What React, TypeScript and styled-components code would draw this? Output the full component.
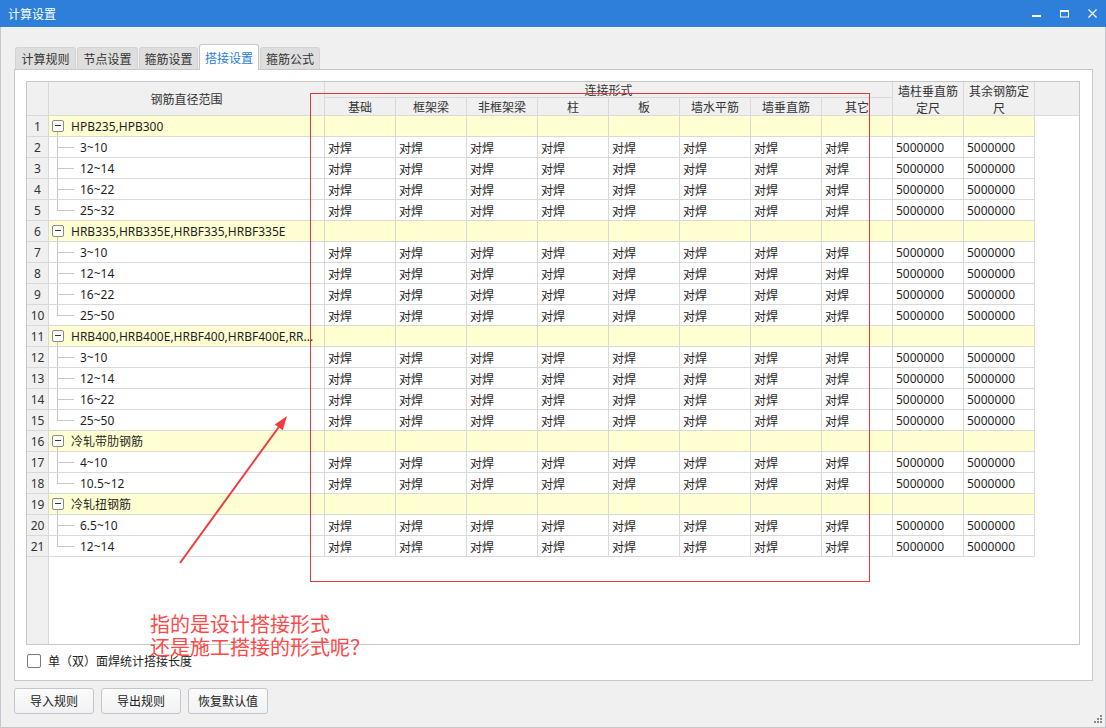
import React from 'react';
import styled, { createGlobalStyle } from 'styled-components';

const LATIN = `"Noto Sans", "Noto Sans CJK SC", sans-serif`;
const CJK = `"Noto Sans CJK SC", "Noto Sans", sans-serif`;
const LINE = '#d9d9d9';
const COLS = '22px 276px repeat(10, 71px) 1fr';

const GlobalStyle = createGlobalStyle`
  *, *::before, *::after { box-sizing: border-box; }
  html, body { margin: 0; padding: 0; background: #f0f0f0; }
  body { font-family: ${LATIN}; font-size: 12px; color: #1f1f1f; }
`;

const Window = styled.div`
  position: relative;
  width: 1106px;
  height: 728px;
  display: flex;
  flex-direction: column;
  background: #f0f0f0;
  overflow: hidden;
`;

const TitleBar = styled.div`
  height: 27px;
  flex: none;
  background: #2d7fda;
  color: #fff;
  display: flex;
  align-items: center;
  justify-content: space-between;
  padding-left: 8px;
`;

const Title = styled.span`
  font-family: ${CJK};
  font-size: 12px;
  line-height: 16px;
`;

const Controls = styled.div`
  display: flex;
  height: 100%;
`;

const ControlBtn = styled.div`
  width: 28px;
  height: 100%;
  display: flex;
  align-items: center;
  justify-content: center;
`;

const Body = styled.div`
  flex: 1;
  display: flex;
  flex-direction: column;
  padding: 17px 0 0 13px;
  border-left: 1px solid #c4c8ce;
  border-right: 1px solid #c4c8ce;
  border-bottom: 1px solid #c4c8ce;
`;

const TabStrip = styled.div`
  display: flex;
  align-items: flex-end;
  gap: 1px;
  height: 25px;
  margin-left: 1px;
  position: relative;
  z-index: 1;
`;

const Tab = styled.div<{ $active?: boolean; $w: number }>`
  width: ${(p) => p.$w}px;
  height: ${(p) => (p.$active ? 26 : 22)}px;
  margin-bottom: ${(p) => (p.$active ? -1 : 0)}px;
  display: flex;
  align-items: center;
  justify-content: center;
  padding-top: ${(p) => (p.$active ? 1 : 0)}px;
  font-family: ${CJK};
  font-size: 12px;
  line-height: 16px;
  border: 1px solid ${(p) => (p.$active ? '#c6c6c6' : '#d3d3d3')};
  border-bottom: none;
  border-radius: 3px 3px 0 0;
  background: ${(p) => (p.$active ? '#ffffff' : '#dedede')};
  color: ${(p) => (p.$active ? '#2a7ed6' : '#333333')};
`;

const Panel = styled.div`
  width: 1079px;
  height: 612px;
  background: #fff;
  border: 1px solid #c8c8c8;
  padding: 11px 11px 0;
  display: flex;
  flex-direction: column;
`;

const Table = styled.div`
  width: 1054px;
  height: 564px;
  flex: none;
  display: flex;
  flex-direction: column;
  border: 1px solid #c6c6c6;
  background: #fff;
`;

const HeadGrid = styled.div`
  display: grid;
  grid-template-columns: ${COLS};
  grid-template-rows: 16px 18px;
  flex: none;
`;

const HeadCell = styled.div<{ $col: string; $row: string; $noRight?: boolean }>`
  grid-column: ${(p) => p.$col};
  grid-row: ${(p) => p.$row};
  background: #f0f0f0;
  border-right: ${(p) => (p.$noRight ? 'none' : `1px solid ${LINE}`)};
  border-bottom: 1px solid ${LINE};
  display: flex;
  align-items: center;
  justify-content: center;
  text-align: center;
  font-family: ${CJK};
  font-size: 12px;
  line-height: 17px;
  color: #333;
  overflow: hidden;
`;

const Row = styled.div`
  display: grid;
  grid-template-columns: ${COLS};
  height: 21px;
  flex: none;
`;

const RowNum = styled.div`
  background: #f0f0f0;
  border-right: 1px solid ${LINE};
  border-bottom: 1px solid ${LINE};
  display: flex;
  align-items: center;
  justify-content: center;
  padding-top: 1px;
  color: #333;
  font-size: 12px;
  line-height: 16px;
`;

const Cell = styled.div<{ $group?: boolean }>`
  background: ${(p) => (p.$group ? '#ffffd2' : '#ffffff')};
  border-right: 1px solid ${LINE};
  border-bottom: 1px solid ${LINE};
  display: flex;
  align-items: center;
  padding: 1px 0 0 3px;
  white-space: nowrap;
  overflow: hidden;
  font-size: 12px;
  line-height: 16px;
  color: #1f1f1f;
`;

const NameCell = styled(Cell)<{ $child?: boolean }>`
  padding-left: ${(p) => (p.$child ? 8 : 3)}px;
  padding-top: 0;
`;

const Label = styled.span`
  padding-top: 1px;
`;

const Cjk = styled.span`
  font-family: ${CJK};
`;

const Blank = styled.div`
  background: #fff;
`;

const Expander = styled.span`
  position: relative;
  flex: none;
  width: 12px;
  height: 12px;
  margin-right: 7px;
  border: 1px solid #8c8c8c;
  border-radius: 2px;
  background: #fff;
  &::before {
    content: '';
    position: absolute;
    left: 2px;
    top: 4px;
    width: 6px;
    height: 1px;
    background: #333;
  }
  &::after {
    content: '';
    position: absolute;
    left: 4px;
    top: 11px;
    width: 1px;
    height: 5px;
    background: #c6c6c6;
  }
`;

const Guide = styled.span<{ $last?: boolean }>`
  position: relative;
  flex: none;
  align-self: stretch;
  width: 17px;
  margin-right: 6px;
  &::before {
    content: '';
    position: absolute;
    left: 0;
    top: 0;
    width: 1px;
    height: ${(p) => (p.$last ? '50%' : '100%')};
    background: #c6c6c6;
  }
  &::after {
    content: '';
    position: absolute;
    left: 0;
    right: 0;
    top: 50%;
    height: 1px;
    background: #c6c6c6;
  }
`;

const Filler = styled.div`
  flex: 1;
  display: grid;
  grid-template-columns: 22px 1fr;
`;

const FillerNum = styled.div`
  background: #f0f0f0;
  border-right: 1px solid ${LINE};
`;

const CheckRow = styled.div`
  display: flex;
  align-items: center;
  gap: 7px;
  padding: 8px 0 0 1px;
  font-family: ${CJK};
  font-size: 12px;
  line-height: 16px;
  color: #222;
`;

const CheckBox = styled.span`
  width: 14px;
  height: 14px;
  border: 1px solid #7a7a7a;
  border-radius: 2px;
  background: #fff;
  flex: none;
`;

const ButtonRow = styled.div`
  display: flex;
  gap: 7px;
  margin-top: 7px;
`;

const Btn = styled.button`
  width: 80px;
  height: 26px;
  padding: 0;
  border: 1px solid #c3c7cd;
  border-radius: 3px;
  background: linear-gradient(#fbfbfb, #f1f2f3);
  font-family: ${CJK};
  font-size: 12px;
  line-height: 16px;
  color: #222;
`;

const Grip = styled.svg`
  position: absolute;
  right: 3px;
  bottom: 4px;
`;

const RedFrame = styled.div`
  position: absolute;
  left: 310px;
  top: 93px;
  width: 560px;
  height: 489px;
  border: 1px solid #e4393a;
  pointer-events: none;
`;

const Arrow = styled.svg`
  position: absolute;
  left: 170px;
  top: 405px;
  pointer-events: none;
`;

const Note = styled.div`
  position: absolute;
  left: 150px;
  top: 612px;
  font-family: ${CJK};
  font-size: 20px;
  line-height: 23px;
  color: #ff4848;
  white-space: pre;
  pointer-events: none;
`;

const groups = [
  { name: 'HPB235,HPB300', items: ['3~10', '12~14', '16~22', '25~32'] },
  { name: 'HRB335,HRB335E,HRBF335,HRBF335E', items: ['3~10', '12~14', '16~22', '25~50'] },
  { name: 'HRB400,HRB400E,HRBF400,HRBF400E,RR...', items: ['3~10', '12~14', '16~22', '25~50'] },
  { name: '冷轧带肋钢筋', items: ['4~10', '10.5~12'] },
  { name: '冷轧扭钢筋', items: ['6.5~10', '12~14'] },
];

type RowData = { group: boolean; label: string; last?: boolean };
const rows: RowData[] = [];
groups.forEach((g) => {
  rows.push({ group: true, label: g.name });
  g.items.forEach((it, i) => rows.push({ group: false, label: it, last: i === g.items.length - 1 }));
});

const subHeads = ['基础', '框架梁', '非框架梁', '柱', '板', '墙水平筋', '墙垂直筋', '其它'];

const tabs = [
  { label: '计算规则', w: 61 },
  { label: '节点设置', w: 61 },
  { label: '箍筋设置', w: 59 },
  { label: '搭接设置', w: 60, active: true },
  { label: '箍筋公式', w: 60 },
];

export default function App() {
  return (
    <>
      <GlobalStyle />
      <Window>
        <TitleBar>
          <Title>计算设置</Title>
          <Controls>
            <ControlBtn>
              <svg width="9" height="9" viewBox="0 0 9 9">
                <rect x="0" y="6" width="9" height="2" fill="#fff" />
              </svg>
            </ControlBtn>
            <ControlBtn>
              <svg width="9" height="9" viewBox="0 0 9 9">
                <rect x="0.5" y="1.5" width="8" height="6.5" fill="none" stroke="#fff" strokeWidth="1" />
                <rect x="0" y="1" width="9" height="2" fill="#fff" />
              </svg>
            </ControlBtn>
            <ControlBtn>
              <svg width="9" height="9" viewBox="0 0 9 9">
                <path d="M0.5 0.5 L8.5 8.5 M8.5 0.5 L0.5 8.5" stroke="#fff" strokeWidth="1.3" />
              </svg>
            </ControlBtn>
          </Controls>
        </TitleBar>
        <Body>
          <TabStrip>
            {tabs.map((t) => (
              <Tab key={t.label} $w={t.w} $active={t.active}>
                {t.label}
              </Tab>
            ))}
          </TabStrip>
          <Panel>
            <Table>
              <HeadGrid>
                <HeadCell $col="1" $row="1 / 3" />
                <HeadCell $col="2" $row="1 / 3">钢筋直径范围</HeadCell>
                <HeadCell $col="3 / 11" $row="1">连接形式</HeadCell>
                {subHeads.map((h, i) => (
                  <HeadCell key={h} $col={`${i + 3}`} $row="2">
                    {h}
                  </HeadCell>
                ))}
                <HeadCell $col="11" $row="1 / 3">墙柱垂直筋定尺</HeadCell>
                <HeadCell $col="12" $row="1 / 3">其余钢筋定尺</HeadCell>
                <HeadCell $col="13" $row="1 / 3" $noRight />
              </HeadGrid>
              {rows.map((r, i) => (
                <Row key={i}>
                  <RowNum>{i + 1}</RowNum>
                  <NameCell $group={r.group} $child={!r.group}>
                    {r.group ? <Expander /> : <Guide $last={r.last} />}
                    <Label>{r.label}</Label>
                  </NameCell>
                  {subHeads.map((h) => (
                    <Cell key={h} $group={r.group}>
                      {r.group ? '' : <Cjk>对焊</Cjk>}
                    </Cell>
                  ))}
                  <Cell $group={r.group}>{r.group ? '' : '5000000'}</Cell>
                  <Cell $group={r.group}>{r.group ? '' : '5000000'}</Cell>
                  <Blank />
                </Row>
              ))}
              <Filler>
                <FillerNum />
                <Blank />
              </Filler>
            </Table>
            <CheckRow>
              <CheckBox />
              <span>单（双）面焊统计搭接长度</span>
            </CheckRow>
          </Panel>
          <ButtonRow>
            <Btn>导入规则</Btn>
            <Btn>导出规则</Btn>
            <Btn>恢复默认值</Btn>
          </ButtonRow>
        </Body>
        <Grip width="9" height="9" viewBox="0 0 9 9">
          <g fill="#8a8a8a">
            <rect x="6" y="0" width="2" height="2" />
            <rect x="3" y="3" width="2" height="2" />
            <rect x="6" y="3" width="2" height="2" />
            <rect x="0" y="6" width="2" height="2" />
            <rect x="3" y="6" width="2" height="2" />
            <rect x="6" y="6" width="2" height="2" />
          </g>
        </Grip>
        <RedFrame />
        <Arrow width="130" height="170" viewBox="0 0 130 170">
          <line x1="10" y1="158" x2="111" y2="19" stroke="#f03c3c" strokeWidth="2" />
          <polygon points="117,11 112.8,25.2 104.8,19.4" fill="#f03c3c" />
        </Arrow>
        <Note>{'指的是设计搭接形式\n还是施工搭接的形式呢？'}</Note>
      </Window>
    </>
  );
}
